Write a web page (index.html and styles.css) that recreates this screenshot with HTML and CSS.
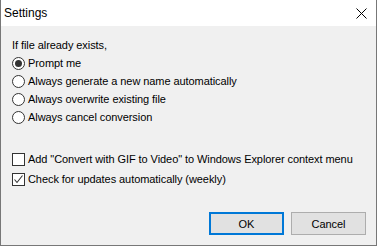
FILE: index.html
```html
<!DOCTYPE html>
<html lang="en">
<head>
  <meta charset="UTF-8" />
  <title>Settings</title>
  <link rel="stylesheet" href="styles.css">
</head>
<body>
  <div class="window">
    <div class="titlebar">
      <span class="title">Settings</span>
      <svg class="close" width="11" height="11" viewBox="0 0 11 11">
        <path d="M0.5 0.5 L10.5 10.5 M10.5 0.5 L0.5 10.5" stroke="#000" stroke-width="1" fill="none"/>
      </svg>
    </div>

    <div class="client">
      <div class="caption">If file already exists,</div>

      <div class="option">
        <span class="radio checked"></span>
        <span>Prompt me</span>
      </div>
      <div class="option">
        <span class="radio"></span>
        <span>Always generate a new name automatically</span>
      </div>
      <div class="option">
        <span class="radio"></span>
        <span>Always overwrite existing file</span>
      </div>
      <div class="option">
        <span class="radio"></span>
        <span>Always cancel conversion</span>
      </div>

      <div class="checks">
        <div class="check-row">
          <span class="box"></span>
          <span>Add "Convert with GIF to Video" to Windows Explorer context menu</span>
        </div>
        <div class="check-row">
          <span class="box">
            <svg width="11" height="11" viewBox="0 0 11 11">
              <path d="M1.5 5.5 L4 8.5 L9.5 1.5" stroke="#333" stroke-width="1.1" fill="none"/>
            </svg>
          </span>
          <span>Check for updates automatically (weekly)</span>
        </div>
      </div>

      <div class="buttons">
        <div class="btn default">OK</div>
        <div class="btn">Cancel</div>
      </div>
    </div>
  </div>
</body>
</html>
```

FILE: styles.css
```css
/* Global */
body {
  margin: 0;
  background: #fff;
  font-family: "Liberation Sans", Arial, sans-serif;
  font-size: 11px;
  letter-spacing: -0.07px;
  color: #000;
  white-space: nowrap;
}
/* Dialog frame */
.window {
  width: 377px;
  height: 246px;
  box-sizing: border-box;
  border: 1px solid #777;
  border-top: none;
  display: flex;
  flex-direction: column;
}
.titlebar {
  height: 26px;
  background: #fff;
  display: flex;
  align-items: center;
  justify-content: space-between;
  padding-left: 3px;
  font-size: 12px;
  letter-spacing: 0;
}
.close {
  margin-right: 9px;
}
.client {
  flex: 1;
  background: #f0f0f0;
  padding: 10px 0 0 11px;
}
.caption {
  line-height: 18px;
}
.option,
.check-row {
  display: flex;
  align-items: center;
  gap: 3px;
  height: 18px;
}
.radio {
  width: 11px;
  height: 11px;
  border: 1px solid #333;
  border-radius: 50%;
  background: #fff;
  display: flex;
  align-items: center;
  justify-content: center;
}
.radio.checked::after {
  content: "";
  width: 7px;
  height: 7px;
  border-radius: 50%;
  background: #333;
}
.checks {
  margin-top: 23px;
}
.check-row {
  height: 20px;
}
.box {
  width: 11px;
  height: 11px;
  border: 1px solid #333;
  background: #fff;
  display: flex;
}
/* Buttons */
.buttons {
  display: flex;
  justify-content: flex-end;
  gap: 7px;
  margin-top: 23px;
  padding-right: 10px;
}
.btn {
  width: 73px;
  height: 21px;
  border: 1px solid #adadad;
  background: #e1e1e1;
  display: flex;
  align-items: center;
  justify-content: center;
}
.btn.default {
  width: 71px;
  height: 19px;
  border: 2px solid #0078d7;
}
```
